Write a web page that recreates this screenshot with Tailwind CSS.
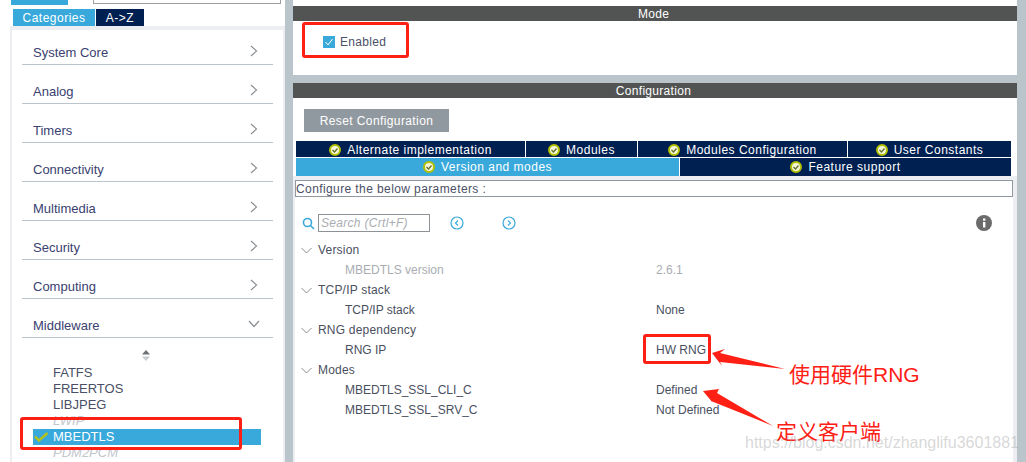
<!DOCTYPE html>
<html lang="en">
<head>
<meta charset="UTF-8">
<title>MBEDTLS Configuration</title>
<script src="https://cdn.jsdelivr.net/npm/@tailwindcss/browser@4"></script>
</head>
<body class="bg-white">
<div class="relative flex w-[1026px] h-[462px] overflow-hidden bg-white font-['Liberation_Sans','Noto_Sans_CJK_SC',sans-serif] text-[12px]">

  <!-- left column -->
  <aside class="w-[285px] shrink-0 flex flex-col">
    <div class="flex h-[9px] items-start pl-[11px]">
      <div class="w-[57px] h-[5px] bg-[#39a9dc]"></div>
      <div class="ml-[25px] w-[188px] h-[4px] border-x border-b border-[#9a9fa3]"></div>
    </div>
    <div class="flex h-[17px] pl-[13px] gap-px text-white tracking-[0.5px]">
      <div class="w-[82px] bg-[#39a9dc] flex items-center justify-center">Categories</div>
      <div class="w-[48px] bg-[#002052] flex items-center justify-center">A-&gt;Z</div>
    </div>
    <div class="flex-1 ml-[10px] bg-[#eceef1] pt-[4px] px-[2px] min-h-0">
      <div class="h-full bg-white pt-[11px] overflow-hidden">
        <div class="flex flex-col gap-[15px] mx-[10px] text-[#3a4170] text-[13px]">
          <div class="h-[24px] border-b border-[#b9c5cb] flex items-center justify-between pl-[11px] pr-[15px]"><span>System Core</span><svg width="8" height="12" viewBox="0 0 8 12" fill="none" stroke="#8a8f93" stroke-width="1.2" class="-mt-[4px]"><path d="M1 1l5.5 5L1 11"/></svg></div>
          <div class="h-[24px] border-b border-[#b9c5cb] flex items-center justify-between pl-[11px] pr-[15px]"><span>Analog</span><svg width="8" height="12" viewBox="0 0 8 12" fill="none" stroke="#8a8f93" stroke-width="1.2" class="-mt-[4px]"><path d="M1 1l5.5 5L1 11"/></svg></div>
          <div class="h-[24px] border-b border-[#b9c5cb] flex items-center justify-between pl-[11px] pr-[15px]"><span>Timers</span><svg width="8" height="12" viewBox="0 0 8 12" fill="none" stroke="#8a8f93" stroke-width="1.2" class="-mt-[4px]"><path d="M1 1l5.5 5L1 11"/></svg></div>
          <div class="h-[24px] border-b border-[#b9c5cb] flex items-center justify-between pl-[11px] pr-[15px]"><span>Connectivity</span><svg width="8" height="12" viewBox="0 0 8 12" fill="none" stroke="#8a8f93" stroke-width="1.2" class="-mt-[4px]"><path d="M1 1l5.5 5L1 11"/></svg></div>
          <div class="h-[24px] border-b border-[#b9c5cb] flex items-center justify-between pl-[11px] pr-[15px]"><span>Multimedia</span><svg width="8" height="12" viewBox="0 0 8 12" fill="none" stroke="#8a8f93" stroke-width="1.2" class="-mt-[4px]"><path d="M1 1l5.5 5L1 11"/></svg></div>
          <div class="h-[24px] border-b border-[#b9c5cb] flex items-center justify-between pl-[11px] pr-[15px]"><span>Security</span><svg width="8" height="12" viewBox="0 0 8 12" fill="none" stroke="#8a8f93" stroke-width="1.2" class="-mt-[4px]"><path d="M1 1l5.5 5L1 11"/></svg></div>
          <div class="h-[24px] border-b border-[#b9c5cb] flex items-center justify-between pl-[11px] pr-[15px]"><span>Computing</span><svg width="8" height="12" viewBox="0 0 8 12" fill="none" stroke="#8a8f93" stroke-width="1.2" class="-mt-[4px]"><path d="M1 1l5.5 5L1 11"/></svg></div>
          <div class="h-[24px] border-b border-[#b9c5cb] flex items-center justify-between pl-[11px] pr-[13px]"><span>Middleware</span><svg width="12" height="8" viewBox="0 0 12 8" fill="none" stroke="#8a8f93" stroke-width="1.2" class="-mt-[4px]"><path d="M1 1l5 5.5L11 1"/></svg></div>
        </div>
        <div class="flex justify-center w-[268px] h-[27px] pt-[12px]">
          <svg width="10" height="11" viewBox="0 0 10 11"><path d="M5 0l4 4.5H1z" fill="#6d7275"/><path d="M5 11L1 6.5h8z" fill="#c9cccf"/></svg>
        </div>
        <div class="flex flex-col ml-[21px] w-[228px] text-[#4a4f66] text-[13px]">
          <div class="h-[16px] flex items-center pl-[20px]">FATFS</div>
          <div class="h-[16px] flex items-center pl-[20px]">FREERTOS</div>
          <div class="h-[16px] flex items-center pl-[20px]">LIBJPEG</div>
          <div class="h-[16px] flex items-center pl-[20px] italic text-[#c3c6cb]">LWIP</div>
          <div class="h-[16px] flex items-center bg-[#39a9dc] text-white">
            <svg width="15" height="10" viewBox="0 0 15 10" fill="none" stroke="#b5c21c" stroke-width="2.4" class="ml-px mr-[4px]"><path d="M1 4.5l4 4L13.5 1"/></svg>MBEDTLS
          </div>
          <div class="h-[16px] flex items-center pl-[20px] italic text-[#c3c6cb]">PDM2PCM</div>
        </div>
      </div>
    </div>
  </aside>

  <div class="w-[8px] shrink-0 bg-[#b9c5cb]"></div>

  <!-- right column -->
  <main class="w-[724px] shrink-0 flex flex-col">
    <div class="h-[6px]"></div>
    <div class="h-[15px] bg-[#525453] text-white flex items-center justify-center pr-[3px] tracking-[0.3px]">Mode</div>
    <div class="h-[54px] flex items-start pl-[30px] pt-[15px]">
      <div class="flex items-center h-[12px] text-[#4a5068] tracking-[0.3px]">
        <span class="w-[12px] h-[12px] bg-[#39a9dc] flex items-center justify-center"><svg width="10" height="10" viewBox="0 0 10 10" fill="none" stroke="#fff" stroke-width="1"><path d="M1.5 5l2.5 3 4.5-6"/></svg></span>
        <span class="ml-[5px]">Enabled</span>
      </div>
    </div>
    <div class="h-[8px] bg-[#b9c5cb]"></div>
    <div class="h-[15px] bg-[#525453] text-white flex items-center justify-center pr-[3px] tracking-[0.3px]">Configuration</div>
    <div class="ml-[11px] mt-[11px] w-[145px] h-[23px] bg-[#9199a0] text-white flex items-center justify-center tracking-[0.4px]">Reset Configuration</div>

    <div class="ml-[3px] mt-[9px] w-[715px] text-white tracking-[0.5px]">
      <div class="flex h-[16px] gap-px">
        <div class="w-[229px] pt-px bg-[#002052] flex items-center justify-center gap-[6px]"><svg width="12" height="12" viewBox="0 0 12 12"><circle cx="6" cy="6" r="5" fill="#f4f6d8" stroke="#b3c000" stroke-width="2"/><path d="M3.5 6l2 2 3-3.5" fill="none" stroke="#66702a" stroke-width="1.3"/></svg>Alternate implementation</div>
        <div class="w-[111px] pt-px bg-[#002052] flex items-center justify-center gap-[6px]"><svg width="12" height="12" viewBox="0 0 12 12"><circle cx="6" cy="6" r="5" fill="#f4f6d8" stroke="#b3c000" stroke-width="2"/><path d="M3.5 6l2 2 3-3.5" fill="none" stroke="#66702a" stroke-width="1.3"/></svg>Modules</div>
        <div class="w-[209px] pt-px bg-[#002052] flex items-center justify-center gap-[6px]"><svg width="12" height="12" viewBox="0 0 12 12"><circle cx="6" cy="6" r="5" fill="#f4f6d8" stroke="#b3c000" stroke-width="2"/><path d="M3.5 6l2 2 3-3.5" fill="none" stroke="#66702a" stroke-width="1.3"/></svg>Modules Configuration</div>
        <div class="w-[163px] pt-px bg-[#002052] flex items-center justify-center gap-[6px]"><svg width="12" height="12" viewBox="0 0 12 12"><circle cx="6" cy="6" r="5" fill="#f4f6d8" stroke="#b3c000" stroke-width="2"/><path d="M3.5 6l2 2 3-3.5" fill="none" stroke="#66702a" stroke-width="1.3"/></svg>User Constants</div>
      </div>
      <div class="flex h-[18px] gap-px mt-px">
        <div class="w-[383px] pb-px bg-[#39a9dc] flex items-center justify-center gap-[6px]"><svg width="12" height="12" viewBox="0 0 12 12"><circle cx="6" cy="6" r="5" fill="#f4f6d8" stroke="#b3c000" stroke-width="2"/><path d="M3.5 6l2 2 3-3.5" fill="none" stroke="#66702a" stroke-width="1.3"/></svg>Version and modes</div>
        <div class="w-[331px] pb-px bg-[#002052] flex items-center justify-center gap-[6px]"><svg width="12" height="12" viewBox="0 0 12 12"><circle cx="6" cy="6" r="5" fill="#f4f6d8" stroke="#b3c000" stroke-width="2"/><path d="M3.5 6l2 2 3-3.5" fill="none" stroke="#66702a" stroke-width="1.3"/></svg>Feature support</div>
      </div>
    </div>

    <div class="flex-1 min-h-0 bg-[#eceef1] pt-[4px] pl-[2px] pr-[4px]">
      <div class="h-[17px] border border-[#9199a0] bg-white flex items-center text-[#4a4f66] tracking-[0.4px]">Configure the below parameters :</div>
      <div class="h-full bg-white">
        <div class="flex items-center pt-[17px] h-[35px]">
          <svg width="13" height="13" viewBox="0 0 13 13" fill="none" stroke="#39a9dc" stroke-width="1.6" class="ml-[7px]"><circle cx="5.5" cy="5.5" r="4"/><path d="M8.5 8.5L12 12"/></svg>
          <div class="ml-[3px] w-[112px] h-[18px] border border-[#8d9296] flex items-center pl-[2px] italic text-[#a9adb2] tracking-[0.3px]">Search (Crtl+F)</div>
          <svg width="14" height="14" viewBox="0 0 14 14" fill="none" stroke="#39a9dc" stroke-width="1.2" class="ml-[20px]"><circle cx="7" cy="7" r="6"/><path d="M8 4.5L5.5 7 8 9.5"/></svg>
          <svg width="14" height="14" viewBox="0 0 14 14" fill="none" stroke="#39a9dc" stroke-width="1.2" class="ml-[38px]"><circle cx="7" cy="7" r="6"/><path d="M6 4.5L8.5 7 6 9.5"/></svg>
          <svg width="16" height="16" viewBox="0 0 16 16" class="ml-[460px]"><circle cx="8" cy="8" r="8" fill="#6b6b6b"/><rect x="7" y="7" width="2.4" height="5.5" fill="#fff"/><rect x="7" y="3.5" width="2.4" height="2.2" fill="#fff"/></svg>
        </div>
        <div class="mt-[8px] flex flex-col text-[#4a5060]">
          <div class="h-[20px] flex items-center"><svg width="11" height="7" viewBox="0 0 11 7" fill="none" stroke="#8a8f93" class="ml-[6px] mr-[6px]"><path d="M.5 1l5 5 5-5"/></svg><span class="tracking-[0.2px]">Version</span></div>
          <div class="h-[20px] flex items-center text-[#a9adb2]"><span class="w-[361px] pl-[50px]">MBEDTLS version</span><span>2.6.1</span></div>
          <div class="h-[20px] flex items-center"><svg width="11" height="7" viewBox="0 0 11 7" fill="none" stroke="#8a8f93" class="ml-[6px] mr-[6px]"><path d="M.5 1l5 5 5-5"/></svg><span class="tracking-[0.2px]">TCP/IP stack</span></div>
          <div class="h-[20px] flex items-center"><span class="w-[361px] pl-[50px]">TCP/IP stack</span><span>None</span></div>
          <div class="h-[20px] flex items-center"><svg width="11" height="7" viewBox="0 0 11 7" fill="none" stroke="#8a8f93" class="ml-[6px] mr-[6px]"><path d="M.5 1l5 5 5-5"/></svg><span class="tracking-[0.2px]">RNG dependency</span></div>
          <div class="h-[20px] flex items-center"><span class="w-[361px] pl-[50px]">RNG IP</span><span>HW RNG</span></div>
          <div class="h-[20px] flex items-center"><svg width="11" height="7" viewBox="0 0 11 7" fill="none" stroke="#8a8f93" class="ml-[6px] mr-[6px]"><path d="M.5 1l5 5 5-5"/></svg><span class="tracking-[0.2px]">Modes</span></div>
          <div class="h-[20px] flex items-center"><span class="w-[361px] pl-[50px]">MBEDTLS_SSL_CLI_C</span><span>Defined</span></div>
          <div class="h-[20px] flex items-center"><span class="w-[361px] pl-[50px]">MBEDTLS_SSL_SRV_C</span><span>Not Defined</span></div>
        </div>
      </div>
    </div>
  </main>

  <div class="w-[9px] shrink-0 bg-[#b9c5cb]"></div>

  <!-- red annotations drawn over the screenshot -->
  <div class="absolute left-[20px] top-[417px] w-[222px] h-[33px] border-[3px] border-[#ff2015] rounded-[3px]"></div>
  <div class="absolute left-[302px] top-[22px] w-[107px] h-[36px] border-[3px] border-[#ff2015] rounded-[3px]"></div>
  <div class="absolute left-[643px] top-[334px] w-[68px] h-[30px] border-[3px] border-[#ff2015] rounded-[3px]"></div>
  <svg class="absolute left-0 top-0" width="1026" height="462" viewBox="0 0 1026 462" fill="#ff2015"><polygon points="712,353 725,349 720,353 785,369 720,362 722,366"/><polygon points="703,391 719,389 717,393 773,426 711,401 713,403"/></svg>
  <div class="absolute left-[789px] top-[362px] text-[21px] leading-[26px] text-[#ff2015]">使用硬件RNG</div>
  <div class="absolute left-[776px] top-[419px] text-[21px] leading-[26px] text-[#ff2015]">定义客户端</div>
  <div class="absolute left-[745px] top-[434px] text-[16px] leading-[18px] text-[#9a9a9a]/40 whitespace-nowrap">https://blog.csdn.net/zhanglifu3601881</div>
</div>
</body>
</html>
